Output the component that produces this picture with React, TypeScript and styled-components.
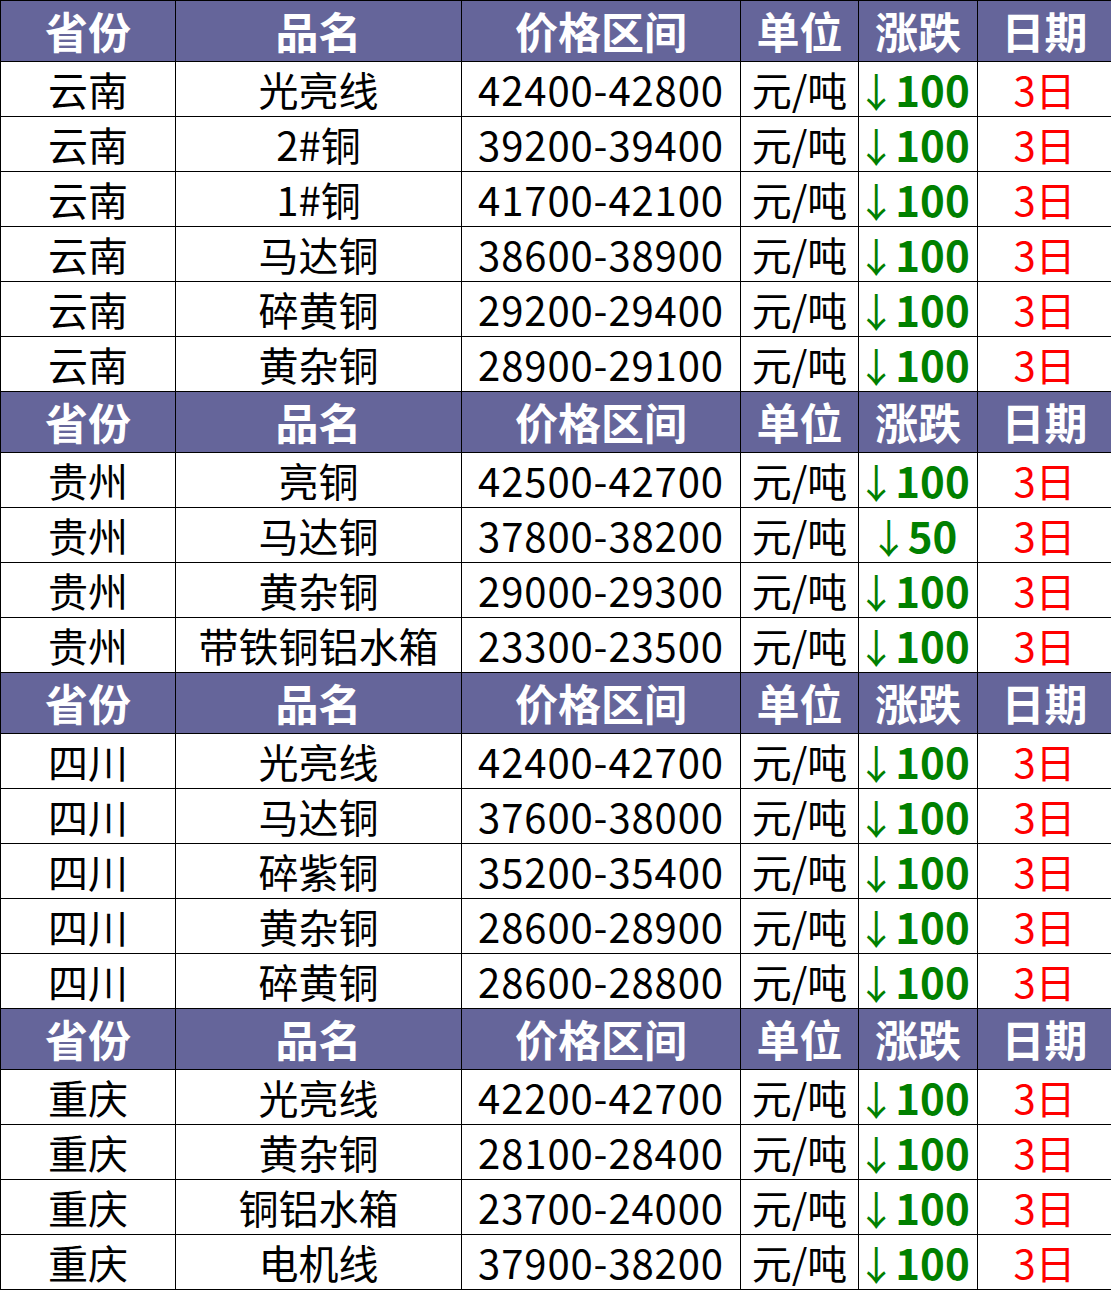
import styled, { createGlobalStyle } from 'styled-components'

const GlobalStyle = createGlobalStyle`
  html, body {
    margin: 0;
    padding: 0;
    background: #ffffff;
  }
`

const Table = styled.table`
  width: 1111px;
  table-layout: fixed;
  border-collapse: collapse;
  font-family: "Noto Sans CJK SC", "Noto Sans", sans-serif;
  border-left: 1px solid #c8c8c8;
`

const HeadRow = styled.tr`
  height: 61px;
  background-color: #65659a;
`

const HeadCell = styled.td`
  padding: 0;
  border: 1px solid #000;
  color: #ffffff;
  font-size: 43px;
  font-weight: 700;
  text-align: center;
  line-height: 1.2;
  white-space: nowrap;
`

const Row = styled.tr`
  height: 55px;
`

const Cell = styled.td<{ $tone?: 'down' | 'date' | 'num' }>`
  padding: 0;
  border: 1px solid #000;
  color: ${(p) => (p.$tone === 'down' ? '#008000' : p.$tone === 'date' ? '#ff0000' : '#000000')};
  font-size: ${(p) => (p.$tone === 'down' ? '42px' : '40px')};
  font-weight: ${(p) => (p.$tone === 'down' ? 700 : 400)};
  letter-spacing: ${(p) => (p.$tone === 'num' ? '0.9px' : '0')};
  text-align: center;
  line-height: 1.1;
  white-space: nowrap;
`

const Arrow = styled.span`
  font-family: "Noto Sans CJK SC", sans-serif;
  font-weight: 400;
  font-size: 40px;
  margin: 0 -1px 0 -10px;
`

type Item = [string, string, string, string]

const groups: { items: Item[] }[] = [
  {
    items: [
      ['云南', '光亮线', '42400-42800', '100'],
      ['云南', '2#铜', '39200-39400', '100'],
      ['云南', '1#铜', '41700-42100', '100'],
      ['云南', '马达铜', '38600-38900', '100'],
      ['云南', '碎黄铜', '29200-29400', '100'],
      ['云南', '黄杂铜', '28900-29100', '100'],
    ],
  },
  {
    items: [
      ['贵州', '亮铜', '42500-42700', '100'],
      ['贵州', '马达铜', '37800-38200', '50'],
      ['贵州', '黄杂铜', '29000-29300', '100'],
      ['贵州', '带铁铜铝水箱', '23300-23500', '100'],
    ],
  },
  {
    items: [
      ['四川', '光亮线', '42400-42700', '100'],
      ['四川', '马达铜', '37600-38000', '100'],
      ['四川', '碎紫铜', '35200-35400', '100'],
      ['四川', '黄杂铜', '28600-28900', '100'],
      ['四川', '碎黄铜', '28600-28800', '100'],
    ],
  },
  {
    items: [
      ['重庆', '光亮线', '42200-42700', '100'],
      ['重庆', '黄杂铜', '28100-28400', '100'],
      ['重庆', '铜铝水箱', '23700-24000', '100'],
      ['重庆', '电机线', '37900-38200', '100'],
    ],
  },
]

const headers = ['省份', '品名', '价格区间', '单位', '涨跌', '日期']
const widths = [175, 286, 279, 118, 119, 134]

export default function App() {
  return (
    <>
      <GlobalStyle />
      <Table>
        <colgroup>
          {widths.map((w, i) => (
            <col key={i} style={{ width: w }} />
          ))}
        </colgroup>
        <tbody>
          {groups.map((g, gi) => [
            <HeadRow key={`h${gi}`}>
              {headers.map((h) => (
                <HeadCell key={h}>{h}</HeadCell>
              ))}
            </HeadRow>,
            ...g.items.map((it, ri) => (
              <Row key={`r${gi}-${ri}`}>
                <Cell>{it[0]}</Cell>
                <Cell>{it[1]}</Cell>
                <Cell $tone="num">{it[2]}</Cell>
                <Cell>元/吨</Cell>
                <Cell $tone="down">
                  <Arrow>↓</Arrow>
                  {it[3]}
                </Cell>
                <Cell $tone="date">3日</Cell>
              </Row>
            )),
          ])}
        </tbody>
      </Table>
    </>
  )
}
